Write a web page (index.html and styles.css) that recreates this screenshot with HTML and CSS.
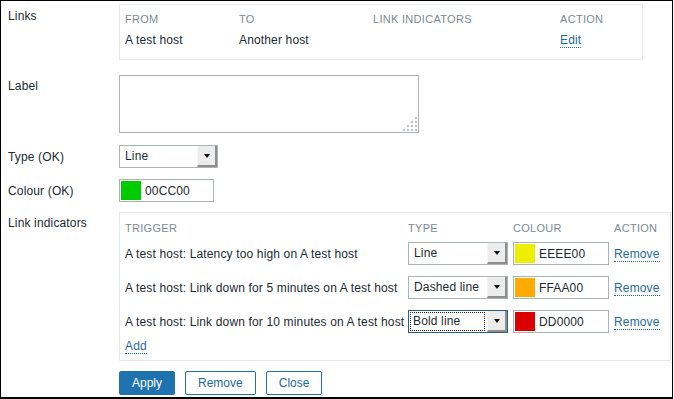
FILE: index.html
```html
<!DOCTYPE html>
<html lang="en">
<head>
    <meta charset="UTF-8">
    <title>Map link</title>
    <link rel="stylesheet" href="styles.css">
</head>
<body>
    <div class="marco">
        <div class="fila fila_links">
            <div class="etiqueta">Links</div>
            <div class="caja caja_links">
                <div class="tabla_links cabecera">
                    <span>FROM</span><span>TO</span><span>LINK INDICATORS</span><span>ACTION</span>
                </div>
                <div class="tabla_links datos">
                    <span>A test host</span><span>Another host</span><span></span><span><a class="enlace">Edit</a></span>
                </div>
            </div>
        </div>

        <div class="fila fila_label">
            <div class="etiqueta">Label</div>
            <div class="texto_area">
                <svg class="agarre" width="14" height="14" viewBox="0 0 14 14">
                    <rect x="12" y="0" width="2" height="2"/>
                    <rect x="8" y="4" width="2" height="2"/><rect x="12" y="4" width="2" height="2"/>
                    <rect x="4" y="8" width="2" height="2"/><rect x="8" y="8" width="2" height="2"/><rect x="12" y="8" width="2" height="2"/>
                    <rect x="0" y="12" width="2" height="2"/><rect x="4" y="12" width="2" height="2"/><rect x="8" y="12" width="2" height="2"/><rect x="12" y="12" width="2" height="2"/>
                </svg>
            </div>
        </div>

        <div class="fila fila_control fila_tipo">
            <div class="etiqueta">Type (OK)</div>
            <div class="selector selector_tipo">
                <span class="selector_texto">Line</span>
                <span class="selector_boton"><span class="flecha"></span></span>
            </div>
        </div>

        <div class="fila fila_control fila_colour">
            <div class="etiqueta">Colour (OK)</div>
            <div class="colour colour_principal">
                <span class="muestra verde"></span>
                <span class="colour_texto">00CC00</span>
            </div>
        </div>

        <div class="fila fila_indicadores">
            <div class="etiqueta">Link indicators</div>
            <div class="caja caja_indicadores">
                <div class="tabla_ind cabecera">
                    <span>TRIGGER</span><span>TYPE</span><span>COLOUR</span><span>ACTION</span>
                </div>
                <div class="tabla_ind linea">
                    <span>A test host: Latency too high on A test host</span>
                    <div class="selector">
                        <span class="selector_texto">Line</span>
                        <span class="selector_boton"><span class="flecha"></span></span>
                    </div>
                    <div class="colour">
                        <span class="muestra amarillo"></span>
                        <span class="colour_texto">EEEE00</span>
                    </div>
                    <span><a class="enlace">Remove</a></span>
                </div>
                <div class="tabla_ind linea">
                    <span>A test host: Link down for 5 minutes on A test host</span>
                    <div class="selector">
                        <span class="selector_texto">Dashed line</span>
                        <span class="selector_boton"><span class="flecha"></span></span>
                    </div>
                    <div class="colour">
                        <span class="muestra naranja"></span>
                        <span class="colour_texto">FFAA00</span>
                    </div>
                    <span><a class="enlace">Remove</a></span>
                </div>
                <div class="tabla_ind linea">
                    <span>A test host: Link down for 10 minutes on A test host</span>
                    <div class="selector enfocado">
                        <span class="selector_texto"><span class="foco">Bold line</span></span>
                        <span class="selector_boton"><span class="flecha"></span></span>
                    </div>
                    <div class="colour">
                        <span class="muestra rojo"></span>
                        <span class="colour_texto">DD0000</span>
                    </div>
                    <span><a class="enlace">Remove</a></span>
                </div>
                <div class="anadir"><a class="enlace">Add</a></div>
            </div>
        </div>

        <div class="botones">
            <span class="boton principal">Apply</span>
            <span class="boton">Remove</span>
            <span class="boton">Close</span>
        </div>
    </div>
</body>
</html>
```

FILE: styles.css
```css
body{
    margin:0;
    font-family:"Liberation Sans", Arial, sans-serif;
    font-size:12px;
    letter-spacing:0.15px;
    color:#1c2a31;
}
.marco{
    width:673px;
    height:399px;
    box-sizing:border-box;
    border:1px solid #000;
    border-bottom-width:2px;
    padding:3px 0 0 7px;
}
.fila{
    display:flex;
    align-items:flex-start;
}
.etiqueta{
    width:111px;
    flex-shrink:0;
    line-height:14px;
    padding-top:5px;
}
.fila_control{
    align-items:center;
}
.fila_control .etiqueta{
    padding-top:1px;
}
.fila_label{
    margin-top:15px;
}
.fila_label .etiqueta{
    padding-top:4px;
}
.fila_tipo{
    margin-top:12px;
}
.fila_colour{
    margin-top:11px;
}
.fila_indicadores{
    margin-top:10px;
}
.fila_indicadores .etiqueta{
    padding-top:4px;
}
.caja{
    border:1px solid #e5e9eb;
    box-sizing:border-box;
}
.caja_links{
    width:524px;
    height:56px;
    padding:7px 5px 0 5px;
}
.cabecera{
    font-size:11px;
    line-height:14px;
    color:#7c8b93;
    letter-spacing:0.3px;
}
.tabla_links{
    display:grid;
    grid-template-columns:114px 134px 187px auto;
    line-height:14px;
}
.tabla_links.datos{
    margin-top:7px;
}
.enlace{
    color:#1f6a9e;
    border-bottom:1px dotted #1f6a9e;
}
.texto_area{
    position:relative;
    width:300px;
    height:58px;
    box-sizing:border-box;
    border:1px solid #aab3b8;
}
.agarre{
    position:absolute;
    right:1px;
    bottom:1px;
    fill:#bcc3c7;
}
.selector{
    display:flex;
    width:100px;
    height:23px;
    box-sizing:border-box;
    border:1px solid #aab3b8;
    background:#fff;
}
.selector_tipo{
    width:99px;
}
.selector_texto{
    flex:1;
    padding-left:5px;
    line-height:21px;
    white-space:nowrap;
}
.selector_boton{
    width:20px;
    box-sizing:border-box;
    background:#ececec;
    border-left:1px solid #f6f6f6;
    border-right:2px solid #8e8e8e;
    border-bottom:2px solid #8e8e8e;
    display:flex;
    align-items:center;
    justify-content:center;
}
.flecha{
    width:0;
    height:0;
    border-left:3px solid transparent;
    border-right:3px solid transparent;
    border-top:4px solid #111;
    margin-top:1px;
}
.enfocado{
    border-color:#2a5d80;
}
.enfocado .selector_texto{
    padding:1px 2px 1px 1px;
}
.foco{
    display:block;
    height:17px;
    line-height:17px;
    padding-left:2px;
    border:1px dotted #222;
}
.colour{
    display:flex;
    align-items:center;
    width:96px;
    height:23px;
    box-sizing:border-box;
    border:1px solid #aab3b8;
    padding-left:1px;
}
.colour_principal{
    width:95px;
}
.muestra{
    width:20px;
    height:19px;
}
.verde{ background:#00cc00; }
.amarillo{ background:#eeee00; }
.naranja{ background:#ffaa00; }
.rojo{ background:#dd0000; }
.colour_texto{
    margin-left:4px;
}
.caja_indicadores{
    width:552px;
    height:149px;
    padding:8px 5px 0 5px;
}
.tabla_ind{
    display:grid;
    grid-template-columns:283px 105px 101px auto;
    align-items:center;
}
.tabla_ind.linea{
    margin-top:11px;
    white-space:nowrap;
}
.cabecera + .linea{
    margin-top:7px;
}
.anadir{
    margin-top:6px;
    line-height:14px;
}
.botones{
    display:flex;
    gap:10px;
    margin:10px 0 0 111px;
}
.boton{
    height:24px;
    box-sizing:border-box;
    line-height:22px;
    padding:0 12px;
    border:1px solid #1f72ad;
    border-radius:2px;
    color:#1f6a9e;
    background:#fff;
    letter-spacing:0;
}
.boton.principal{
    background:#1f72b0;
    color:#fff;
}
```
